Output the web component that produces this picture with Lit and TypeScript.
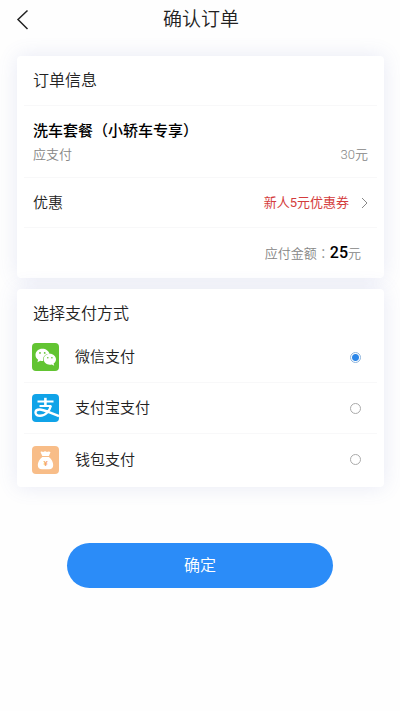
import { LitElement, html, css, svg } from "lit";
import { customElement, state } from "lit/decorators.js";

const wechatIcon = svg`
  <svg class="logo" viewBox="0 0 27 28" aria-hidden="true">
    <rect width="27" height="28" rx="4" fill="#62c432" />
    <path fill="#fff" d="M10.300 5.700C6.500 5.700 3.500 8.400 3.500 11.900c0 2 1 3.700 2.600 4.800l-.7 2.600 2.900-1.600c.8.2 1.600.3 2.400.3h.5c-.9-3.800 2-7.300 6.300-7.300h.1C16.700 7.800 13.900 5.700 10.300 5.700z" />
    <path fill="#fff" d="M24 16.300c0-3-2.800-5.500-6.200-5.500s-6.200 2.500-6.200 5.500 2.800 5.400 6.200 5.400c.7 0 1.400-.1 2-.3l2.400 1.400-.6-2.200c1.500-1 2.400-2.500 2.400-4.300z" />
    <g fill="#62c432">
      <circle cx="8" cy="9.900" r="0.900" />
      <circle cx="12.700" cy="9.900" r="0.900" />
      <circle cx="15.800" cy="14.800" r="0.800" />
      <circle cx="19.900" cy="14.800" r="0.800" />
    </g>
  </svg>`;

const alipayIcon = svg`
  <svg class="logo" viewBox="0 0 27 28" aria-hidden="true">
    <rect width="27" height="28" rx="4" fill="#10a3e8" />
    <g fill="none" stroke="#fff">
      <path stroke-width="2" d="M5.500 7.600H21.500M7.500 11.900H19" />
      <path stroke-width="2.600" d="M13.400 3.800V12" />
      <path stroke-width="2.400" d="M19 11.500C17.500 17 13.500 21.800 8 21.800c-2.800 0-4.500-1.300-4.500-3.200 0-2 1.900-3.100 4.200-3.100 4.300 0 8.800 3 19.300 6.500" />
    </g>
  </svg>`;

const walletIcon = svg`
  <svg class="logo" viewBox="0 0 27 28" aria-hidden="true">
    <rect width="27" height="28" rx="4" fill="#f8bd88" />
    <path fill="#fff" d="M8.500 6c1-.9 2-.4 2.700 0 .8-1 2.700-1.200 3.700 0 .9-.7 2.700-.9 3.600.2L16.900 10h-6.600z" />
    <path fill="#fff" d="M10.300 11h6.600c2.800 2.400 4.300 5.200 4.300 8 0 2.900-1.700 4.200-4 4.200h-7.200c-2.500 0-4.200-1.300-4.200-4.200 0-2.800 1.700-5.600 4.500-8z" />
    <text class="yen" x="13.700" y="20" text-anchor="middle">¥</text>
  </svg>`;

const methods = [
  { id: "wechat", label: "微信支付", icon: wechatIcon },
  { id: "alipay", label: "支付宝支付", icon: alipayIcon },
  { id: "wallet", label: "钱包支付", icon: walletIcon },
];

@customElement("app-root")
export class AppRoot extends LitElement {
  @state() private method = "wechat";

  static styles = css`
    :host {
      display: block;
      min-height: 100vh;
      background: #fefefe;
      color: #222;
      font-family: Roboto, "Noto Sans CJK SC", sans-serif;
      font-size: 15px;
      font-weight: 350;
      line-height: 24px;
    }
    * {
      box-sizing: border-box;
    }
    button {
      font: inherit;
      border: 0;
      cursor: pointer;
    }
    h1, h2, h3, p {
      margin: 0;
      font-weight: inherit;
    }
    header {
      display: grid;
      grid-template-columns: 48px 1fr 46px;
      align-items: center;
      height: 40px;
    }
    .back {
      display: flex;
      padding: 8px 16px;
      background: none;
    }
    .back svg {
      width: 14px;
      height: 22px;
      flex: none;
    }
    h1 {
      font-size: 19px;
      line-height: 28px;
      text-align: center;
    }
    main {
      display: flex;
      flex-direction: column;
      gap: 11px;
      padding: 16px 16px 24px 17px;
    }
    .card {
      padding: 0 7px;
      border-radius: 4px;
      background: #fff;
      box-shadow: 0 0 20px rgba(90, 105, 190, 0.14);
    }
    .row {
      display: flex;
      align-items: center;
      justify-content: space-between;
      min-height: 50px;
      padding: 0 9px;
      border-bottom: 1px solid #f8f8f9;
    }
    .row:last-child {
      border-bottom: 0;
    }
    h2 {
      font-size: 16px;
    }
    .item {
      padding: 13px 9px 10px;
      border-bottom: 1px solid #f8f8f9;
    }
    h3 {
      font-size: 15px;
      font-weight: 500;
      color: #000;
    }
    .due {
      display: flex;
      justify-content: space-between;
    }
    .muted {
      font-size: 13px;
      color: #868686;
    }
    .coupon {
      display: flex;
      align-items: center;
      gap: 12px;
      padding: 0;
      background: none;
      font-size: 13px;
      font-weight: 400;
      color: #d43c3c;
    }
    .coupon svg {
      width: 7px;
      height: 12px;
    }
    .total {
      justify-content: flex-end;
      padding-right: 16px;
    }
    .colon {
      font-family: "Noto Sans CJK TC", sans-serif;
    }
    .amount {
      font-size: 16px;
      font-weight: 500;
      color: #000;
    }
    .methods {
      padding-top: 13px;
      padding-bottom: 2px;
    }
    .methods h2 {
      padding: 0 9px 6px;
    }
    .method {
      gap: 16px;
      min-height: 51px;
      padding: 0 16px 0 8px;
      cursor: pointer;
    }
    .name {
      flex: 1;
    }
    .logo {
      width: 27px;
      height: 28px;
      flex: none;
    }
    .yen {
      font-size: 8px;
      font-weight: 700;
      fill: #f5a868;
    }
    input {
      appearance: none;
      width: 11px;
      height: 11px;
      margin: 0;
      border: 1px solid #aaa;
      border-radius: 50%;
      background: #fff;
    }
    input:checked {
      border-color: #8db4dc;
      background: radial-gradient(circle, #2b86e8 3px, #fff 4px);
    }
    footer {
      display: flex;
      justify-content: center;
      padding: 32px 0 24px;
    }
    .confirm {
      width: 66.7%;
      height: 45px;
      border-radius: 23px;
      background: #2b8cf8;
      color: #fff;
      font-size: 16px;
    }
  `;

  render() {
    return html`
      <header>
        <button class="back" aria-label="返回">
          <svg viewBox="0 0 14 22" fill="none" stroke="#222" stroke-width="1.500">
            <path d="M11.500 1.500L2 10.500l9.500 9.500" />
          </svg>
        </button>
        <h1>确认订单</h1>
      </header>
      <main>
        <section class="card">
          <div class="row"><h2>订单信息</h2></div>
          <div class="item">
            <h3>洗车套餐（小轿车专享）</h3>
            <p class="due muted"><span>应支付</span><span>30元</span></p>
          </div>
          <div class="row">
            <span>优惠</span>
            <button class="coupon">
              新人5元优惠券
              <svg viewBox="0 0 7 12" fill="none" stroke="#888" aria-hidden="true">
                <path d="M1 1l5 5-5 5" />
              </svg>
            </button>
          </div>
          <div class="row total">
            <p class="muted">应付金额<span class="colon">：</span><span class="amount">25</span>元</p>
          </div>
        </section>
        <section class="card methods">
          <h2 id="pay-title">选择支付方式</h2>
          <div role="radiogroup" aria-labelledby="pay-title">
            ${methods.map(
              (m) => html`
                <label class="row method">
                  ${m.icon}
                  <span class="name">${m.label}</span>
                  <input
                    type="radio"
                    name="method"
                    .value=${m.id}
                    .checked=${this.method === m.id}
                    @change=${() => (this.method = m.id)}
                  />
                </label>
              `
            )}
          </div>
        </section>
      </main>
      <footer><button class="confirm">确定</button></footer>
    `;
  }
}
